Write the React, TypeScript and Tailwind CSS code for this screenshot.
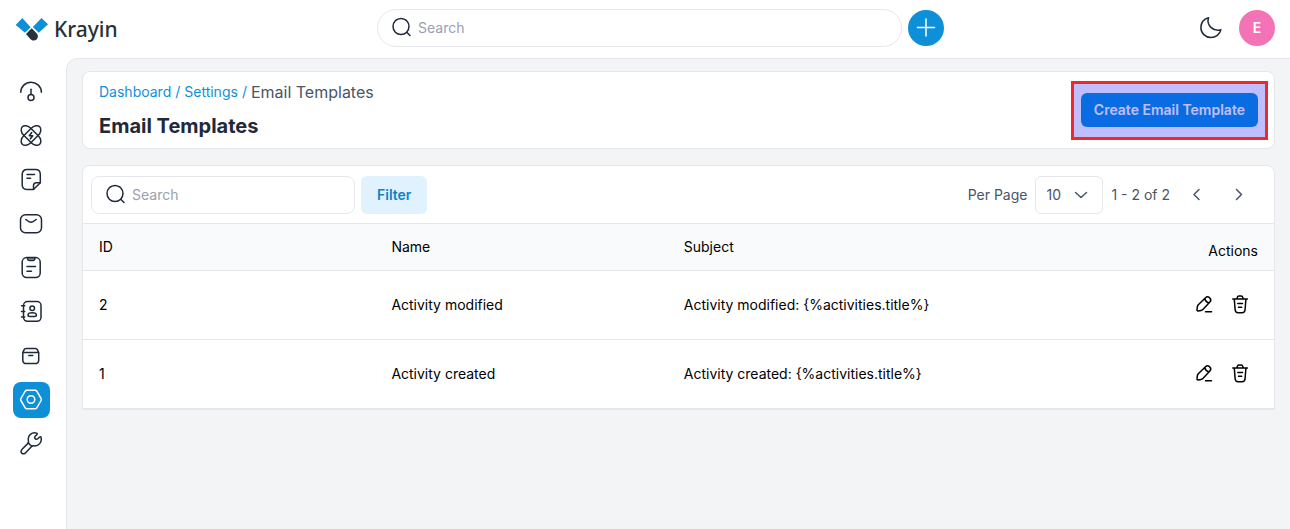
import type { ReactNode } from "react";

function Icon({ children, className = "size-6" }: { children: ReactNode; className?: string }) {
  return (
    <svg
      viewBox="0 0 24 24"
      className={className}
      fill="none"
      stroke="currentColor"
      strokeWidth="1.5"
      strokeLinecap="round"
      strokeLinejoin="round"
      aria-hidden="true"
    >
      {children}
    </svg>
  );
}

const navItems: { label: string; icon: ReactNode }[] = [
  {
    label: "Dashboard",
    icon: (
      <>
        <path d="M1.800 12.300C1.800 6.600 6.400 2.300 12 2.300s10.400 4.300 10.400 10" />
        <circle cx="12" cy="17.600" r="3" />
        <path d="M12 14.400V9.200" />
      </>
    ),
  },
  {
    label: "Leads",
    icon: (
      <>
        <rect x="-0.3" y="6.5" width="24.6" height="10" rx="7" ry="5" transform="rotate(45 12 11.5)" />
        <rect x="-0.3" y="6.5" width="24.6" height="10" rx="7" ry="5" transform="rotate(-45 12 11.5)" />
        <path d="m12.700 8.600-2.400 3.100h3.400l-2.300 3.100" strokeWidth="1.6" />
      </>
    ),
  },
  {
    label: "Quotes",
    icon: (
      <>
        <path d="M14.500 21.500H8c-3 0-4.800-1.600-4.800-4.700V6.500c0-3.200 1.800-4.900 4.800-4.900h8.500c3 0 4.800 1.700 4.800 4.900v8.300z" />
        <path d="M14.500 21.300v-3.500c0-2 1-3 2.900-3h3.800" />
        <path d="M8 6.500h7.500M8 10.300h3.500" />
      </>
    ),
  },
  {
    label: "Mail",
    icon: (
      <>
        <rect x="1.5" y="2.8" width="21" height="18" rx="5" />
        <path d="M6.800 7.500 10 9.700c1.300.8 2.700.8 4 0l3.200-2.200" />
      </>
    ),
  },
  {
    label: "Activities",
    icon: (
      <>
        <rect x="3.2" y="1.6" width="18" height="19.9" rx="4.5" />
        <path d="M8.500 1.800v1c0 1 .7 1.700 1.700 1.700h4c1 0 1.700-.7 1.700-1.700v-1z" fill="#9ca3af" />
        <path d="M8 10.400h8.500M8 15.300h4.500" />
      </>
    ),
  },
  {
    label: "Contacts",
    icon: (
      <>
        <rect x="4.5" y="1.5" width="17.5" height="19.8" rx="4" />
        <path d="M2.500 5.700h3.200M2.500 11.400h3.200M2.500 17.100h3.200" />
        <circle cx="13.2" cy="8.2" r="2.3" />
        <path d="M13.200 12.700c2.500 0 4.200.9 4.200 2.200 0 1-.8 1.500-2 1.500H11c-1.200 0-2-.5-2-1.500 0-1.300 1.700-2.200 4.200-2.200z" />
      </>
    ),
  },
  {
    label: "Products",
    icon: (
      <>
        <path d="M3.800 8.600h16M3.800 8.600v7.300c0 2.300 1.300 3.700 3.700 3.700H16c2.400 0 3.700-1.400 3.700-3.700V8.600l-1.200-2.700c-.4-.9-1.200-1.400-2.200-1.400H7.200c-1 0-1.800.5-2.200 1.400z" />
        <path d="M9.800 11.600h4" />
      </>
    ),
  },
  {
    label: "Settings",
    icon: (
      <>
        <path d="M7.900 2.200h8.200c.8 0 1.300.3 1.700 1l4.300 7.300c.4.700.4 1.300 0 2l-4.300 7.300c-.4.700-.9 1-1.700 1H7.900c-.8 0-1.300-.3-1.700-1l-4.300-7.300c-.4-.7-.4-1.300 0-2l4.300-7.300c.4-.7.9-1 1.700-1z" />
        <circle cx="12" cy="11.500" r="3.800" />
      </>
    ),
  },
  {
    label: "Configuration",
    icon: (
      <>
        <path d="M9.400 8.700c-1-5.300 3.500-8.900 8.300-7.600.7.200.8.800.3 1.300l-1.800 1.900c-.7.800-.7 1.700 0 2.400s1.700.8 2.500.1l2-1.800c.5-.5 1.100-.4 1.300.3 1.300 4.800-2.300 9.200-7.400 8.500-1-.1-1.500.1-1.800.5l-6.100 6.500c-1.200 1.300-2.800 1.400-3.900.3s-1-2.700.3-3.900l6.100-6.100c.4-.5.400-1 .2-2.400z" />
        <path d="M9.300 10.700c.9 1.700 2 2.800 3.800 3.600" />
      </>
    ),
  },
];

const templates = [
  { id: 2, name: "Activity modified", subject: "Activity modified: {%activities.title%}" },
  { id: 1, name: "Activity created", subject: "Activity created: {%activities.title%}" },
];

function SearchBox({ label, className }: { label: string; className: string }) {
  return (
    <label className={`flex h-[38px] items-center gap-1 border border-gray-200 bg-white px-3 text-gray-800 ${className}`}>
      <Icon>
        <circle cx="11" cy="10.5" r="8" />
        <path d="m17 16.500 3 3" />
      </Icon>
      <input
        type="text"
        aria-label={label}
        placeholder="Search"
        className="min-w-0 flex-1 text-sm outline-none placeholder:text-gray-400"
      />
    </label>
  );
}

function Header() {
  return (
    <header className="flex items-center justify-between bg-white pt-[9px] pr-[15px] pb-[11px] pl-4">
      <a href="#" className="flex w-28 items-center gap-[6px] pt-[2px]">
        <svg viewBox="0 0 32 24" className="h-6 w-8 shrink-0 overflow-visible" aria-hidden="true">
          <path d="M6.300 1 14.700 10.200 9 15.800-.3 8z" fill="#0e90d9" />
          <path d="M25.500 1 16.800 9.900 22.800 15.800 32 7.300z" fill="#0e90d9" />
          <path d="m15.700 11.200 4.900 5c1.800 1.900 1.700 4.600 0 6.200-1.700 1.600-4.400 1.500-6-.1L10 17z" fill="#263238" />
        </svg>
        <span className="font-['Noto_Sans',sans-serif] text-[21px] leading-6 font-medium text-[#263238]">Krayin</span>
      </a>

      <div className="flex items-center gap-[6px]">
        <SearchBox label="Search everything" className="w-[40.7vw] rounded-full" />
        <button
          type="button"
          aria-label="Quick create"
          className="flex size-9 items-center justify-center rounded-full bg-[#0e90d9] text-white"
        >
          <Icon>
            <path d="M12 3v17M3.500 11.500h17" />
          </Icon>
        </button>
      </div>

      <div className="flex items-center gap-[10px]">
        <button type="button" aria-label="Dark mode" className="p-[6px] text-gray-800">
          <Icon>
            <path d="M9.500 1.700C5 3 1.900 6.800 1.900 11.600c0 5.600 4.500 9.900 10 9.900 4.900 0 9-3.200 10-7.800-6.900 2.500-14.800-4-12.400-12z" />
          </Icon>
        </button>
        <button
          type="button"
          aria-label="Account"
          className="flex size-9 items-center justify-center rounded-full bg-[#f472b6] text-sm font-semibold text-white"
        >
          E
        </button>
      </div>
    </header>
  );
}

function Sidebar() {
  return (
    <nav aria-label="Main" className="flex w-[66px] shrink-0 flex-col gap-2 bg-white pt-4 pl-[13px]">
      {navItems.map((item) => (
        <a
          key={item.label}
          href="#"
          aria-label={item.label}
          className={`flex h-9 w-[37px] items-center rounded-lg pl-[6px] ${
            item.label === "Settings" ? "bg-[#0e90d9] text-white" : "text-gray-800"
          }`}
        >
          <Icon>{item.icon}</Icon>
        </a>
      ))}
    </nav>
  );
}

function TitleCard() {
  return (
    <section className="flex items-center justify-between rounded-lg border border-gray-200 bg-white px-4 py-2">
      <div className="flex flex-col gap-2">
        <nav aria-label="Breadcrumb" className="flex items-center gap-1 text-sm leading-6 text-[#0e90d9]">
          <a href="#">Dashboard</a>
          <span>/</span>
          <a href="#">Settings</a>
          <span>/</span>
          <span className="text-base text-gray-600">Email Templates</span>
        </nav>
        <h1 className="text-xl leading-7 font-bold text-gray-800">Email Templates</h1>
      </div>
      <div className="relative">
        <button type="button" className="block rounded-md bg-[#0e90d9] px-[13px] py-[7px] text-sm font-semibold text-white">
          Create Email Template
        </button>
        <span className="pointer-events-none absolute -inset-x-[10px] -top-3 -bottom-[13px] border-3 border-[#ef2929] bg-[#0000ff]/25 bg-clip-padding" />
      </div>
    </section>
  );
}

function Toolbar() {
  return (
    <div className="flex items-center justify-between px-2 pt-[10px] pb-[9px] text-sm">
      <div className="flex items-center gap-[6px]">
        <SearchBox label="Search templates" className="w-[264px] rounded-lg" />
        <button type="button" className="h-[38px] rounded-md bg-sky-100 px-4 font-semibold text-[#0e83c9]">
          Filter
        </button>
      </div>
      <div className="flex items-center gap-2 text-gray-600">
        <label htmlFor="per-page">Per Page</label>
        <div className="grid items-center">
          <select
            id="per-page"
            className="col-start-1 row-start-1 h-[38px] w-[68px] appearance-none rounded-md border border-gray-200 bg-white pl-[10px] outline-none"
          >
            <option>10</option>
            <option>20</option>
            <option>50</option>
          </select>
          <span className="pointer-events-none col-start-1 row-start-1 justify-self-end pr-[10px]">
            <Icon>
              <path d="m6.500 9.500 5.500 5 5.500-5" />
            </Icon>
          </span>
        </div>
        <span>1 - 2 of 2</span>
        <div className="flex items-center gap-[6px] pr-[10px]">
          <button type="button" aria-label="Previous page" className="p-[6px]">
            <Icon>
              <path d="m15 6.500-5 5 5 5" />
            </Icon>
          </button>
          <button type="button" aria-label="Next page" className="p-[6px]">
            <Icon>
              <path d="m10.500 6.500 5 5-5 5" />
            </Icon>
          </button>
        </div>
      </div>
    </div>
  );
}

function RowActions() {
  return (
    <div className="flex justify-end">
      <button type="button" aria-label="Edit" className="p-[6px]">
        <Icon>
          <path d="m5 16.500.4-2.900c.1-.8.4-1.300.9-1.900l7.200-6.900c1.200-1.200 2.800-1.200 4.100 0 1.400 1.400 1.500 3 .3 4.300l-7 7.300c-.5.5-1.100.9-1.900 1l-2.900.6c-.8.1-1.200-.6-1.100-1.500zM12.800 5.800c.5 2 1.900 3.500 4 3.900M13.500 18.800h6" />
        </Icon>
      </button>
      <button type="button" aria-label="Delete" className="p-[6px]">
        <Icon>
          <path d="M4.800 6.100h14.600M9 5.800l.3-1.400c.2-.9.6-1.400 1.600-1.400h2.300c1 0 1.400.5 1.600 1.400l.3 1.400M6.300 6.300l.8 10.200c.2 2.300 1 3.200 3 3.200h4c2 0 2.800-.9 3-3.200l.8-10.200M9.800 10.500h4.700M10.500 14.200h3.200" />
        </Icon>
      </button>
    </div>
  );
}

function TemplateTable() {
  return (
    <table className="w-full table-fixed text-left text-sm text-black">
      <thead>
        <tr className="h-[47px] border-y border-gray-200 bg-gray-50">
          <th className="w-[24.55%] px-4 font-normal">ID</th>
          <th className="w-[24.55%] px-4 font-normal">Name</th>
          <th className="w-[24.55%] px-4 font-normal">Subject</th>
          <th className="px-4 pt-2 text-right font-normal">Actions</th>
        </tr>
      </thead>
      <tbody>
        {templates.map((t) => (
          <tr key={t.id} className="h-[69px] border-b border-gray-200">
            <td className="px-4">{t.id}</td>
            <td className="px-4">{t.name}</td>
            <td className="px-4">{t.subject}</td>
            <td className="px-4">
              <RowActions />
            </td>
          </tr>
        ))}
      </tbody>
    </table>
  );
}

export default function App() {
  return (
    <div className="flex min-h-screen flex-col bg-white font-['Inter',sans-serif]">
      <Header />
      <div className="flex flex-1">
        <Sidebar />
        <main className="flex min-w-0 flex-1 flex-col gap-4 rounded-tl-xl border-t border-l border-gray-200 bg-gray-100 px-[15px] pt-3 pb-4">
          <TitleCard />
          <section className="overflow-hidden rounded-t-lg border border-gray-200 bg-white">
            <Toolbar />
            <TemplateTable />
          </section>
        </main>
      </div>
    </div>
  );
}
